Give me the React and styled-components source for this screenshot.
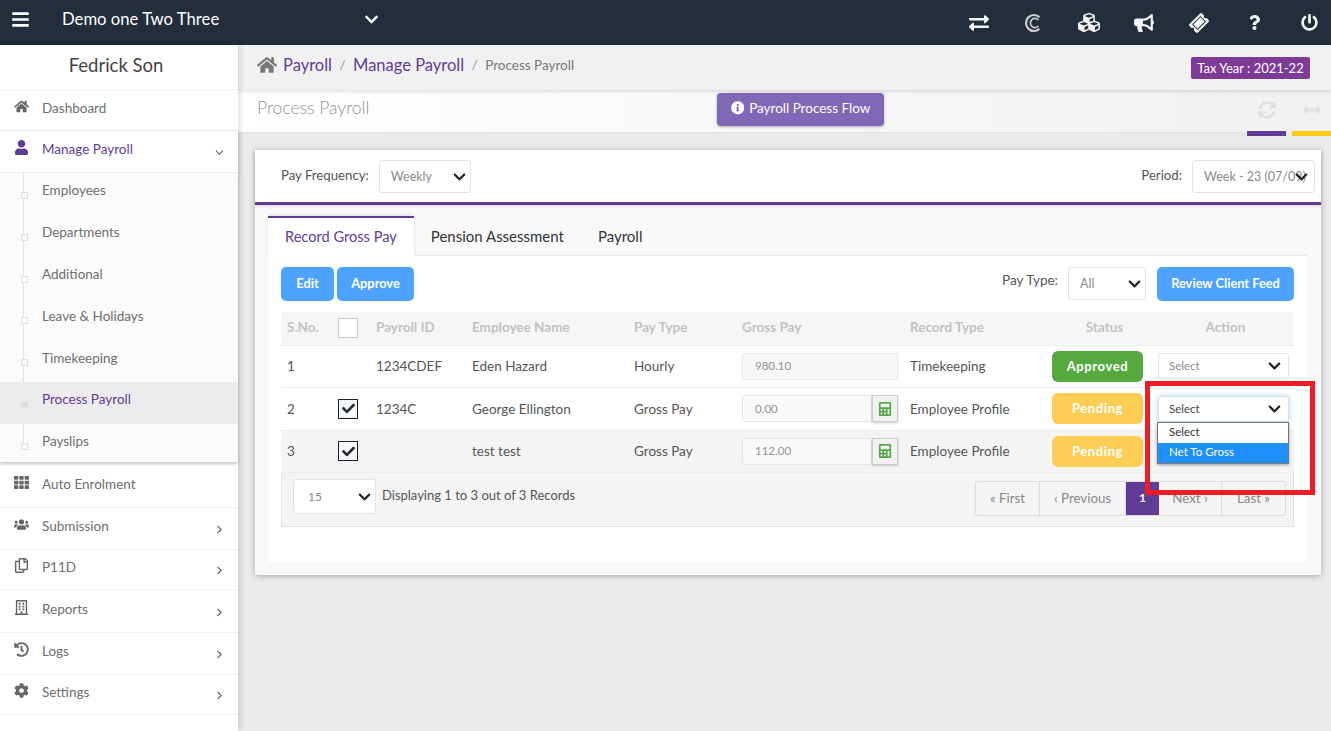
import React from "react";
import styled, {createGlobalStyle} from "styled-components";
import {
    FaBars, FaChevronDown, FaExchangeAlt, FaCubes, FaBullhorn, FaTicketAlt, FaQuestion, FaPowerOff,
    FaHome, FaUser, FaTh, FaUsers, FaRegCopy, FaRegBuilding, FaHistory, FaCog, FaSyncAlt, FaArrowsAltH,
    FaInfoCircle, FaCheck, FaCalculator
} from "react-icons/fa";
import {ChevronDown, ChevronRight} from "lucide-react";

const PURPLE = "#5f3d94";
const FONT = `Lato, "Open Sans", sans-serif`;

const GlobalStyle = createGlobalStyle`
  html, body {
    margin: 0;
    height: 100%;
    background: #ebebeb;
    overflow: hidden;
  }
  * { box-sizing: border-box; }
  body {
    font-family: ${FONT};
    font-size: 13.5px;
    color: #555;
  }
`

const Page = styled.div`
  height: 731px;
  display: flex;
  flex-direction: column;
  position: relative;
`

const TopBar = styled.header`
  height: 45px;
  flex: none;
  background: #232d3b;
  color: #fff;
  display: flex;
  align-items: center;
  padding: 0 11px 7px 11px;
`

const Company = styled.div`
  font-size: 16.7px;
  margin-left: 32px;
  width: 302px;
`

const TopActions = styled.div`
  margin-left: auto;
  margin-top: 7px;
  display: flex;
  align-items: center;
  gap: 33px;
  font-size: 20px;
  color: #f4f4f4;
`

const TopIcon = styled.span`
  display: flex;
  width: 22px;
  justify-content: center;
`

const Body = styled.div`
  flex: 1;
  display: flex;
  min-height: 0;
`

const Sidebar = styled.aside`
  width: 238px;
  flex: none;
  background: #fff;
  box-shadow: 1px 0 6px rgba(0, 0, 0, .18);
  z-index: 2;
`

const UserName = styled.div`
  height: 45px;
  display: flex;
  align-items: center;
  justify-content: center;
  padding: 0 6px 5px 0;
  font-size: 18.5px;
  color: #444;
  border-bottom: 1px solid #f0f0f0;
`

const NavItem = styled.div`
  height: ${({h}) => h || 41.8}px;
  display: flex;
  align-items: center;
  padding: 0 14px 5px;
  border-bottom: 1px solid #f0f0f0;
  color: ${({active}) => active ? PURPLE : "#6e6e6e"};
  box-shadow: ${({active}) => active ? "0 2px 5px rgba(0,0,0,.2)" : "none"};
  position: relative;
  background: #fff;
`

const NavIcon = styled.span`
  width: 28px;
  display: flex;
  font-size: 15px;
  margin-top: -3px;
  color: ${({active}) => active ? PURPLE : "#666"};
`

const NavCaret = styled.span`
  margin-left: auto;
  display: flex;
  margin-top: 7px;
  margin-right: -2px;
  color: #666;
`

const SubList = styled.div`
  height: 289px;
  background: #fbfbfb;
  position: relative;
  box-shadow: 0 2px 3px rgba(0, 0, 0, .22);
  margin-bottom: 4px;

  &::before {
    content: "";
    position: absolute;
    left: 23px;
    top: 0;
    bottom: 19px;
    width: 1px;
    background: #e2e2e2;
  }
`

const SubItem = styled.div`
  height: 41.8px;
  display: flex;
  align-items: center;
  padding: 0 0 7px 42px;
  color: ${({active}) => active ? PURPLE : "#6e6e6e"};
  background: ${({active}) => active ? "#ececec" : "transparent"};
  position: relative;

  &::before {
    content: "";
    position: absolute;
    left: 21px;
    top: 19px;
    width: 5px;
    height: 5px;
    background: ${({active}) => active ? "#ddd" : "#fbfbfb"};
    border: 1px solid #dfdfdf;
  }
`

const Main = styled.main`
  flex: 1;
  min-width: 0;
  display: flex;
  flex-direction: column;
`

const Crumbs = styled.div`
  height: 45px;
  flex: none;
  background: #f1f1f1;
  display: flex;
  align-items: center;
  padding: 0 21px 6px 19px;
  box-shadow: 0 1px 4px rgba(0, 0, 0, .16);
  z-index: 1;
`

const CrumbLink = styled.span`
  color: ${PURPLE};
  font-size: 16.5px;
`

const CrumbSep = styled.span`
  color: #999;
  margin: 0 7.5px;
`

const CrumbCurrent = styled.span`
  color: #777;
  font-size: 13.5px;
`

const TaxYear = styled.span`
  margin: 6px 0 0 auto;
  height: 22px;
  width: 119px;
  display: flex;
  align-items: center;
  justify-content: center;
  background: #7d3a97;
  color: #fff;
  font-size: 13px;
  border-radius: 2px;
`

const TitleBar = styled.div`
  height: 43px;
  flex: none;
  background: linear-gradient(90deg, #fff, #f1f1f1);
  border-bottom: 1px solid #e2e2e2;
  display: flex;
  padding-left: 19px;
`

const Title = styled.h1`
  margin: 7px 0 0;
  font-size: 17.5px;
  font-weight: 300;
  color: #929292;
  width: 460px;
`

const FlowButton = styled.button`
  height: 33px;
  width: 167px;
  margin-top: 3px;
  padding: 0 0 3px;
  border: 0;
  border-radius: 4px;
  background: #7f68b5;
  box-shadow: 0 1px 3px rgba(0, 0, 0, .3);
  color: #fff;
  font: 13.5px ${FONT};
  display: flex;
  align-items: center;
  justify-content: center;
  gap: 5px;
`

const TitleTools = styled.div`
  margin-left: auto;
  display: flex;
  gap: 6px;
`

const Tool = styled.div`
  width: 39px;
  height: 46px;
  display: flex;
  justify-content: center;
  padding-top: 11px;
  font-size: 18px;
  color: #e0e0e0;
  border-bottom: 5px solid ${({color}) => color};
`

const Content = styled.div`
  flex: 1;
  padding: 17px 10px 0 17px;
`

const Card = styled.section`
  height: 425px;
  background: #f9f9f9;
  box-shadow: 0 1px 6px rgba(0, 0, 0, .3);
`

const FilterBar = styled.div`
  height: 55px;
  background: #fff;
  border-bottom: 3px solid ${PURPLE};
  display: flex;
  align-items: flex-start;
  padding: 10px 6px 0 26px;
  box-shadow: 0 1px 3px rgba(0, 0, 0, .15);
`

const Label = styled.span`
  color: #555;
  font-size: 13.2px;
  margin: ${({m}) => m || "7px 10px 0 0"};
`

const SelectBox = styled.div`
  width: ${({w}) => w}px;
  height: ${({h}) => h || 33}px;
  flex: none;
  background: #fff;
  border: 1px solid ${({focused}) => focused ? "#cfe3f7" : "#e3e3e3"};
  border-radius: 3px;
  display: flex;
  align-items: center;
  padding: 0 0 ${({pb}) => pb || 0}px ${({pl}) => pl || 11}px;
  color: ${({dark}) => dark ? "#444" : "#8a8a8a"};
  font-size: ${({fs}) => fs || 12.5}px;
  white-space: nowrap;
  overflow: hidden;
  position: relative;
  box-shadow: ${({focused}) => focused ? "0 0 6px rgba(100,170,240,.45)" : "none"};
`

const Arrow = styled(FaChevronDown)`
  position: absolute;
  right: ${({$right}) => $right || 3}px;
  top: 50%;
  margin-top: -7px;
  width: 15px;
  height: 14px;
  color: #222;
`

const Pane = styled.div`
  padding: 11px 14px 0 13px;
`

const Tabs = styled.div`
  display: flex;
  border-bottom: 1px solid #e8e8e8;
  height: 40px;
`

const Tab = styled.div`
  padding: 0 17px 3px;
  display: flex;
  align-items: center;
  font-size: ${({active}) => active ? 14.6 : 15}px;
  color: ${({active}) => active ? PURPLE : "#333"};
  background: ${({active}) => active ? "#fff" : "transparent"};
  border-top: ${({active}) => active ? `2px solid ${PURPLE}` : "2px solid transparent"};
  height: ${({active}) => active ? 41 : 40}px;
  box-shadow: ${({active}) => active ? "0 -1px 3px rgba(0,0,0,.12)" : "none"};
`

const TabBody = styled.div`
  background: #fff;
  height: 306px;
  padding: 11px 13px 0;
`

const Toolbar = styled.div`
  display: flex;
  height: 45px;
  align-items: flex-start;
`

const Btn = styled.button`
  height: 34px;
  padding: 0 0 2px;
  width: ${({w}) => w}px;
  margin: 0 ${({mr}) => mr ?? 3}px 0 ${({ml}) => ml || 0}px;
  border: 0;
  border-radius: 5px;
  background: #4da3ff;
  color: #fff;
  font: 700 12.8px ${FONT};
`

const ToolbarRight = styled.div`
  margin-left: auto;
  display: flex;
  align-items: flex-start;
`

const PayTypeLabel = styled.span`
  margin: 5px 10px 0 0;
  color: #555;
`

const Row = styled.div`
  display: grid;
  grid-template-columns: 57px 38px 96px 162px 108px 168px 142px 105px 137px;
  height: ${({h}) => h || 42.5}px;
  align-items: center;
  background: ${({bg}) => bg || "#fff"};
  border-bottom: 1px solid #e8edf3;
  color: #555;
`

const HeadCell = styled.div`
  font-weight: 700;
  color: #c2c2c2;
  padding-bottom: 2px;
  text-align: ${({center}) => center ? "center" : "left"};
  padding-left: ${({pl}) => pl || 0}px;
`

const Cell = styled.div`
  display: flex;
  align-items: center;
`

const TextCell = styled.div`
  padding-left: ${({pl}) => pl || 0}px;
`

const Check = styled.div`
  width: 20px;
  height: 20px;
  background: ${({checked}) => checked ? "#f4f8fd" : "#fff"};
  border: ${({checked}) => checked ? "1px solid #222" : "1px solid #ccc"};
  display: flex;
  align-items: center;
  justify-content: center;
  color: #2b2b2b;
  font-size: 13px;
`

const Amount = styled.div`
  width: ${({w}) => w}px;
  height: 27px;
  background: ${({plain}) => plain ? "#f7f7f7" : "#fafafa"};
  border: 1px solid #e6e6e6;
  border-radius: 3px 0 0 3px;
  display: flex;
  align-items: center;
  padding: 0 0 1px 12px;
  font-size: 11.5px;
  color: #929292;
`

const CalcBtn = styled.div`
  width: 26px;
  height: 27px;
  background: #f2f2f2;
  border: 1px solid #ccc;
  box-shadow: 0 1px 2px rgba(0, 0, 0, .2);
  display: flex;
  align-items: center;
  justify-content: center;
  color: #5aa84e;
  font-size: 14px;
`

const Status = styled.div`
  width: 91px;
  height: 31px;
  padding-bottom: 1px;
  border-radius: 6px;
  background: ${({color}) => color};
  color: #fff;
  font-weight: 700;
  font-size: 13px;
  letter-spacing: .6px;
  display: flex;
  align-items: center;
  justify-content: center;
`

const ActionCell = styled.div`
  display: flex;
  padding-left: 1px;
`

const Footer = styled.div`
  height: 54px;
  background: #f4f4f4;
  border: 1px solid #e2e2e2;
  border-top: 0;
  display: flex;
  align-items: flex-start;
  padding: 6px 7px 0 11px;
`

const Displaying = styled.span`
  margin: 8px 0 0 6px;
  font-size: 13px;
  color: #555;
`

const Pager = styled.div`
  margin-left: auto;
  margin-top: 2px;
  display: flex;
  height: 35px;
  border: 1px solid #dcdcdc;
  border-radius: 3px;
`

const PageLink = styled.div`
  width: ${({w}) => w}px;
  padding-bottom: 2px;
  display: flex;
  align-items: center;
  justify-content: center;
  color: ${({active}) => active ? "#fff" : "#888"};
  background: ${({active}) => active ? PURPLE : "transparent"};
  font-weight: ${({active}) => active ? 700 : 400};
  font-size: ${({active}) => active ? 12 : 13.3}px;
  border-right: ${({last, active}) => last || active ? "0" : "1px solid #dcdcdc"};
`

const Dropdown = styled.ul`
  position: absolute;
  left: 1157px;
  top: 422px;
  width: 132px;
  margin: 0;
  padding: 0;
  list-style: none;
  background: #fff;
  border: 1px solid #767676;
  box-shadow: 0 1px 3px rgba(0, 0, 0, .35);
  font-size: 11.5px;
  z-index: 5;
`

const Option = styled.li`
  height: 20px;
  line-height: 18px;
  padding-left: 11px;
  color: ${({selected}) => selected ? "#fff" : "#333"};
  background: ${({selected}) => selected ? "#1e90ff" : "#fff"};
`

const Highlight = styled.div`
  position: absolute;
  left: 1145px;
  top: 381px;
  width: 170px;
  height: 114px;
  border: 5px solid #ee1c25;
  z-index: 6;
`

const CopyMark = () => (
    <svg width="20" height="20" viewBox="0 0 20 20" fill="none" stroke="#cfcfcf">
        <path d="M15.5 4.2A8 8 0 1 0 15.5 15.8" strokeWidth="2.2"/>
        <path d="M14.5 7A4.6 4.6 0 1 0 14.5 13" strokeWidth="1.6"/>
    </svg>
);

const navBottom = [
    {label: "Auto Enrolment", icon: <FaTh/>},
    {label: "Submission", icon: <FaUsers/>, caret: true},
    {label: "P11D", icon: <FaRegCopy/>, caret: true},
    {label: "Reports", icon: <FaRegBuilding/>, caret: true},
    {label: "Logs", icon: <FaHistory/>, caret: true},
    {label: "Settings", icon: <FaCog/>, caret: true, h: 40},
];

const subItems = ["Employees", "Departments", "Additional", "Leave & Holidays", "Timekeeping", "Process Payroll", "Payslips"];

const App = () => {
    return (
        <Page>
            <GlobalStyle/>
            <TopBar>
                <FaBars size={19}/>
                <Company>Demo one Two Three</Company>
                <FaChevronDown size={15}/>
                <TopActions>
                    <TopIcon><FaExchangeAlt/></TopIcon>
                    <TopIcon><CopyMark/></TopIcon>
                    <TopIcon><FaCubes size={23}/></TopIcon>
                    <TopIcon><FaBullhorn/></TopIcon>
                    <TopIcon><FaTicketAlt size={18} style={{transform: "rotate(-45deg)"}}/></TopIcon>
                    <TopIcon><FaQuestion size={15}/></TopIcon>
                    <TopIcon><FaPowerOff size={17}/></TopIcon>
                </TopActions>
            </TopBar>
            <Body>
                <Sidebar>
                    <UserName>Fedrick Son</UserName>
                    <NavItem h={41}>
                        <NavIcon><FaHome/></NavIcon>Dashboard
                    </NavItem>
                    <NavItem active h={42}>
                        <NavIcon active><FaUser/></NavIcon>Manage Payroll
                        <NavCaret><ChevronDown size={13}/></NavCaret>
                    </NavItem>
                    <SubList>
                        {subItems.map(item =>
                            <SubItem key={item} active={item === "Process Payroll"}>{item}</SubItem>
                        )}
                    </SubList>
                    {navBottom.map(item =>
                        <NavItem key={item.label} h={item.h}>
                            <NavIcon>{item.icon}</NavIcon>{item.label}
                            {item.caret && <NavCaret><ChevronRight size={13}/></NavCaret>}
                        </NavItem>
                    )}
                </Sidebar>
                <Main>
                    <Crumbs>
                        <FaHome size={20} color="#777" style={{marginRight: 6}}/>
                        <CrumbLink>Payroll</CrumbLink>
                        <CrumbSep>/</CrumbSep>
                        <CrumbLink>Manage Payroll</CrumbLink>
                        <CrumbSep>/</CrumbSep>
                        <CrumbCurrent>Process Payroll</CrumbCurrent>
                        <TaxYear>Tax Year : 2021-22</TaxYear>
                    </Crumbs>
                    <TitleBar>
                        <Title>Process Payroll</Title>
                        <FlowButton><FaInfoCircle/>Payroll Process Flow</FlowButton>
                        <TitleTools>
                            <Tool color={PURPLE}><FaSyncAlt/></Tool>
                            <Tool color="#fcc917"><FaArrowsAltH/></Tool>
                        </TitleTools>
                    </TitleBar>
                    <Content>
                        <Card>
                            <FilterBar>
                                <Label>Pay Frequency:</Label>
                                <SelectBox w={92}>Weekly<Arrow/></SelectBox>
                                <Label m="7px 10px 0 auto">Period:</Label>
                                <SelectBox w={123}>Week - 23 (07/09)<Arrow $right={5}/></SelectBox>
                            </FilterBar>
                            <Pane>
                                <Tabs>
                                    <Tab active>Record Gross Pay</Tab>
                                    <Tab>Pension Assessment</Tab>
                                    <Tab>Payroll</Tab>
                                </Tabs>
                                <TabBody>
                                    <Toolbar>
                                        <Btn w={53}>Edit</Btn>
                                        <Btn w={77}>Approve</Btn>
                                        <ToolbarRight>
                                            <PayTypeLabel>Pay Type:</PayTypeLabel>
                                            <SelectBox w={78}>All<Arrow/></SelectBox>
                                            <Btn w={137} ml={11} mr={0}>Review Client Feed</Btn>
                                        </ToolbarRight>
                                    </Toolbar>
                                    <Row h={33.5} bg="#f6f6f6">
                                        <HeadCell pl={6}>S.No.</HeadCell>
                                        <Cell><Check/></Cell>
                                        <HeadCell>Payroll ID</HeadCell>
                                        <HeadCell>Employee Name</HeadCell>
                                        <HeadCell>Pay Type</HeadCell>
                                        <HeadCell>Gross Pay</HeadCell>
                                        <HeadCell>Record Type</HeadCell>
                                        <HeadCell center>Status</HeadCell>
                                        <HeadCell center>Action</HeadCell>
                                    </Row>
                                    <Row>
                                        <TextCell pl={6}>1</TextCell>
                                        <Cell/>
                                        <TextCell>1234CDEF</TextCell>
                                        <TextCell>Eden Hazard</TextCell>
                                        <TextCell>Hourly</TextCell>
                                        <Cell><Amount plain w={156}>980.10</Amount></Cell>
                                        <TextCell>Timekeeping</TextCell>
                                        <Cell><Status color="#55a93f">Approved</Status></Cell>
                                        <ActionCell>
                                            <SelectBox w={131} h={26} fs={11.5} pl={10} pb={1}>Select<Arrow $right={6}/></SelectBox>
                                        </ActionCell>
                                    </Row>
                                    <Row>
                                        <TextCell pl={6}>2</TextCell>
                                        <Cell><Check checked><FaCheck/></Check></Cell>
                                        <TextCell>1234C</TextCell>
                                        <TextCell>George Ellington</TextCell>
                                        <TextCell>Gross Pay</TextCell>
                                        <Cell><Amount w={130}>0.00</Amount><CalcBtn><FaCalculator/></CalcBtn></Cell>
                                        <TextCell>Employee Profile</TextCell>
                                        <Cell><Status color="#fecd55">Pending</Status></Cell>
                                        <ActionCell>
                                            <SelectBox w={131} h={26} fs={11.5} pl={10} pb={1} dark focused>Select<Arrow $right={6}/></SelectBox>
                                        </ActionCell>
                                    </Row>
                                    <Row bg="#f4f4f4">
                                        <TextCell pl={6}>3</TextCell>
                                        <Cell><Check checked><FaCheck/></Check></Cell>
                                        <Cell/>
                                        <TextCell>test test</TextCell>
                                        <TextCell>Gross Pay</TextCell>
                                        <Cell><Amount w={130}>112.00</Amount><CalcBtn><FaCalculator/></CalcBtn></Cell>
                                        <TextCell>Employee Profile</TextCell>
                                        <Cell><Status color="#fecd55">Pending</Status></Cell>
                                        <Cell/>
                                    </Row>
                                    <Footer>
                                        <SelectBox w={83} h={35} pl={14} fs={12}>15<Arrow/></SelectBox>
                                        <Displaying>Displaying 1 to 3 out of 3 Records</Displaying>
                                        <Pager>
                                            <PageLink w={64}>« First</PageLink>
                                            <PageLink w={86}>‹ Previous</PageLink>
                                            <PageLink w={33} active>1</PageLink>
                                            <PageLink w={63}>Next ›</PageLink>
                                            <PageLink w={63} last>Last »</PageLink>
                                        </Pager>
                                    </Footer>
                                </TabBody>
                            </Pane>
                        </Card>
                    </Content>
                </Main>
            </Body>
            <Dropdown>
                <Option>Select</Option>
                <Option selected>Net To Gross</Option>
            </Dropdown>
            <Highlight/>
        </Page>
    )
}

export default App;
